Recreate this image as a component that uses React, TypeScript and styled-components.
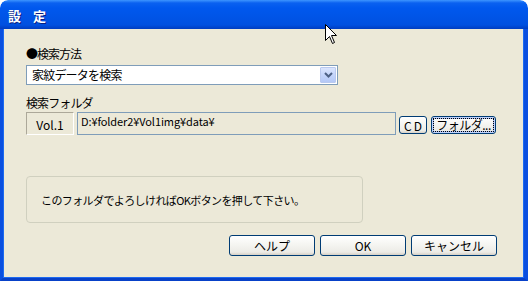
import React from "react";
import styled, { createGlobalStyle } from "styled-components";

const GlobalStyle = createGlobalStyle`
  html, body {
    margin: 0;
    padding: 0;
    background: #ffffff;
  }
  body {
    font-family: "Noto Sans CJK JP", "Liberation Sans", sans-serif;
    font-size: 12px;
  }
`;

const Window = styled.div`
  position: relative;
  width: 528px;
  height: 281px;
  display: flex;
  flex-direction: column;
  box-sizing: border-box;
  overflow: hidden;
  border-radius: 8px 8px 0 0;
`;

const TitleBar = styled.div`
  height: 29px;
  flex: none;
  display: flex;
  align-items: center;
  padding-left: 8px;
  box-sizing: border-box;
  border-radius: 8px 8px 0 0;
  background: linear-gradient(
    to bottom,
    #3d95ff 0px,
    #0a61f0 3px,
    #0058ee 8px,
    #0054e6 18px,
    #0050e0 25px,
    #003dc0 29px
  );
`;

const Title = styled.span`
  color: #ffffff;
  font-weight: bold;
  font-size: 13px;
  line-height: 13px;
  text-shadow: 1px 1px 0 #0a1e80;
  letter-spacing: -0.5px;
  margin-top: 1px;
`;

const Frame = styled.div`
  flex: 1;
  display: flex;
  flex-direction: column;
  background: #ece9d8;
  border-left: 3px solid #0a4fe0;
  border-right: 4px solid #0a4fe0;
  border-bottom: 3px solid #0841c8;
  box-shadow: inset 1px 0 0 #1c6af0, inset -1px 0 0 #1c6af0, inset 0 -1px 0 #1c6af0;
  padding: 18px 27px 0 23px;
`;

const Label = styled.div<{ $spacing?: number }>`
  font-size: 12px;
  line-height: 14px;
  height: 14px;
  color: #000000;
  letter-spacing: ${(p) => p.$spacing ?? 0}px;
`;

const Combo = styled.div`
  margin-top: 4px;
  width: 312px;
  height: 20px;
  box-sizing: border-box;
  border: 1px solid #7f9db9;
  background: #ffffff;
  display: flex;
  align-items: center;
  padding: 1px;
`;

const ComboText = styled.span`
  flex: 1;
  padding-left: 4px;
  font-size: 12px;
  line-height: 16px;
  letter-spacing: -0.8px;
`;

const ComboButton = styled.div`
  width: 16px;
  height: 16px;
  box-sizing: border-box;
  border: 1px solid #b9c9ef;
  border-radius: 1px;
  background: linear-gradient(to bottom, #dbe5fd 0%, #c4d5fb 50%, #b4c8f6 100%);
  display: flex;
  align-items: center;
  justify-content: center;
`;

const FolderLabel = styled(Label)`
  margin-top: 11px;
`;

const PathRow = styled.div`
  margin-top: 2px;
  display: flex;
  align-items: flex-end;
  height: 23px;
`;

const VolBox = styled.div`
  width: 48px;
  height: 23px;
  box-sizing: border-box;
  border-top: 1px solid #aca899;
  border-left: 1px solid #aca899;
  border-right: 1px solid #ffffff;
  border-bottom: 1px solid #ffffff;
  display: flex;
  align-items: center;
  justify-content: center;
  font-size: 12px;
  padding-top: 1px;
`;

const PathBox = styled.div`
  margin-left: 3px;
  width: 319px;
  height: 23px;
  box-sizing: border-box;
  border: 1px solid #7f9db9;
  padding: 1px 3px;
  font-size: 11px;
  line-height: 14px;
  letter-spacing: -0.1px;
`;

const Button = styled.button<{ $w: number; $h?: number; $focus?: boolean }>`
  width: ${(p) => p.$w}px;
  height: ${(p) => p.$h ?? 21}px;
  box-sizing: border-box;
  padding: 0;
  border: 1px solid #003c74;
  border-radius: 3px;
  background: linear-gradient(to bottom, #ffffff 0%, #f4f4f0 50%, #ecebe6 85%, #d6d0c5 100%);
  box-shadow: ${(p) =>
    p.$focus ? "inset 0 0 0 1px #c2d3fc, inset 0 0 0 2px #a9c0f5" : "none"};
  font-family: "Noto Sans CJK JP", "Liberation Sans", sans-serif;
  font-size: 12px;
  color: #000000;
  display: flex;
  align-items: center;
  justify-content: center;
`;

const FocusRing = styled.span`
  outline: 1px dotted #000000;
  outline-offset: 0;
  padding: 0 2px;
  line-height: 12px;
  letter-spacing: -0.5px;
`;

const SmallButton = styled(Button)`
  margin-left: 3px;
  margin-bottom: 1px;
  letter-spacing: 2px;
  padding-left: 2px;
`;

const FolderButton = styled(Button)`
  margin-left: 4px;
  margin-bottom: 1px;
`;

const GroupBox = styled.div`
  margin-top: 41px;
  width: 337px;
  height: 47px;
  box-sizing: border-box;
  border: 1px solid #d0d0bf;
  border-radius: 4px;
  display: flex;
  align-items: center;
  padding: 0 0 0 14px;
  font-size: 11px;
  letter-spacing: -0.6px;
`;

const ButtonRow = styled.div`
  margin-top: 12px;
  display: flex;
  justify-content: flex-end;
  gap: 5px;
`;

const Cursor = styled.svg`
  position: absolute;
  left: 325px;
  top: 24px;
`;

export default function App() {
  return (
    <>
      <GlobalStyle />
      <Window>
        <TitleBar>
          <Title>設　定</Title>
        </TitleBar>
        <Frame>
          <Label $spacing={-1}>●検索方法</Label>
          <Combo>
            <ComboText>家紋データを検索</ComboText>
            <ComboButton>
              <svg width="9" height="6" viewBox="0 0 9 6">
                <path d="M1 1 L4.5 4.5 L8 1" fill="none" stroke="#4d6185" strokeWidth="2" />
              </svg>
            </ComboButton>
          </Combo>
          <FolderLabel $spacing={-0.9}>検索フォルダ</FolderLabel>
          <PathRow>
            <VolBox>Vol.1</VolBox>
            <PathBox>D:¥folder2¥Vol1img¥data¥</PathBox>
            <SmallButton $w={28} $h={18}>CD</SmallButton>
            <FolderButton $w={65} $h={18} $focus>
              <FocusRing>フォルダ...</FocusRing>
            </FolderButton>
          </PathRow>
          <GroupBox>このフォルダでよろしければOKボタンを押して下さい。</GroupBox>
          <ButtonRow>
            <Button $w={86}>ヘルプ</Button>
            <Button $w={86}>OK</Button>
            <Button $w={86}>キャンセル</Button>
          </ButtonRow>
        </Frame>
        <Cursor width="13" height="21" viewBox="0 0 13 21">
          <path
            d="M0.5 0.5 L0.5 16.5 L4.5 12.5 L7.5 19.5 L9.5 18.5 L6.5 11.5 L11.5 11.5 Z"
            fill="#ffffff"
            stroke="#000000"
            strokeWidth="1"
          />
        </Cursor>
      </Window>
    </>
  );
}
